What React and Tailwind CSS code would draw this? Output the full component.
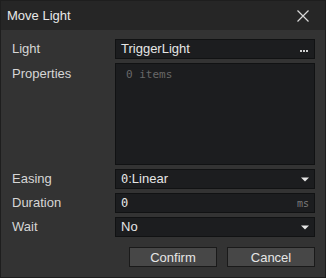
import React from "react";

const sans = { fontFamily: "'Liberation Sans', Arial, sans-serif" };
const mono = { fontFamily: "'DejaVu Sans Mono', monospace" };

const Label = ({ children, top }) => (
	<div className={`text-[13px] text-[#d6d6d6] pl-[1px] ${top ? "pt-[1px]" : "flex items-center"}`}>{children}</div>
);

const Box = ({ children, className = "" }) => (
	<div className={`h-[20px] bg-[#1c1d1f] border border-[#111213] flex items-center pl-[5px] pr-[5px] ${className}`}>
		{children}
	</div>
);

const Caret = () => (
	<svg width="8" height="5" viewBox="0 0 8 5" className="ml-auto">
		<path d="M0 0.5 H8 L4 4.5 Z" fill="#e6e6e6" />
	</svg>
);

export default function App() {
	return (
		<div className="w-[326px] h-[278px] bg-[#333333] border border-[#1e1e1e] flex flex-col" style={sans}>
			<div className="h-[29px] bg-[#262626] flex items-center justify-between pl-[6px] pr-[16px] shrink-0">
				<span className="text-[13px] text-[#e8e8e8]">Move Light</span>
				<svg width="12" height="12" viewBox="0 0 12 12">
					<path d="M0.5 0.5 L11.5 11.5 M11.5 0.5 L0.5 11.5" stroke="#d8d8d8" strokeWidth="1.2" />
				</svg>
			</div>
			<div className="flex flex-col gap-[4px] pl-[10px] pr-[10px] pt-[9px]">
				<div className="grid grid-cols-[104px_1fr]">
					<Label>Light</Label>
					<Box>
						<span className="text-[13px] text-[#e6e6e6]">TriggerLight</span>
						<span className="ml-auto flex gap-[1px] items-center pr-[1px] pt-[3px]">
							<span className="w-[2px] h-[2px] bg-[#cfcfcf]" />
							<span className="w-[2px] h-[2px] bg-[#cfcfcf]" />
							<span className="w-[2px] h-[2px] bg-[#cfcfcf]" />
						</span>
					</Box>
				</div>
				<div className="grid grid-cols-[104px_1fr]">
					<Label top>Properties</Label>
					<div className="h-[102px] bg-[#1c1d1f] border border-[#111213] pl-[10px] pt-[4px] text-[11px] leading-[14px] text-[#686868]" style={mono}>
						0 items
					</div>
				</div>
				<div className="grid grid-cols-[104px_1fr]">
					<Label>Easing</Label>
					<Box>
						<span className="text-[13px] text-[#e6e6e6]">
							<span style={mono} className="text-[12px]">0</span>:Linear
						</span>
						<Caret />
					</Box>
				</div>
				<div className="grid grid-cols-[104px_1fr]">
					<Label>Duration</Label>
					<Box>
						<span className="text-[12px] text-[#e6e6e6]" style={mono}>0</span>
						<span className="ml-auto text-[10px] text-[#7a7a7a]" style={mono}>ms</span>
					</Box>
				</div>
				<div className="grid grid-cols-[104px_1fr]">
					<Label>Wait</Label>
					<Box>
						<span className="text-[13px] text-[#e6e6e6]">No</span>
						<Caret />
					</Box>
				</div>
				<div className="flex justify-end gap-[10px] pt-[6px]">
					<button className="w-[88px] h-[20px] bg-[#474747] border border-[#1a1a1a] text-[13px] text-[#e6e6e6] leading-none">Confirm</button>
					<button className="w-[88px] h-[20px] bg-[#474747] border border-[#1a1a1a] text-[13px] text-[#e6e6e6] leading-none">Cancel</button>
				</div>
			</div>
		</div>
	);
}
